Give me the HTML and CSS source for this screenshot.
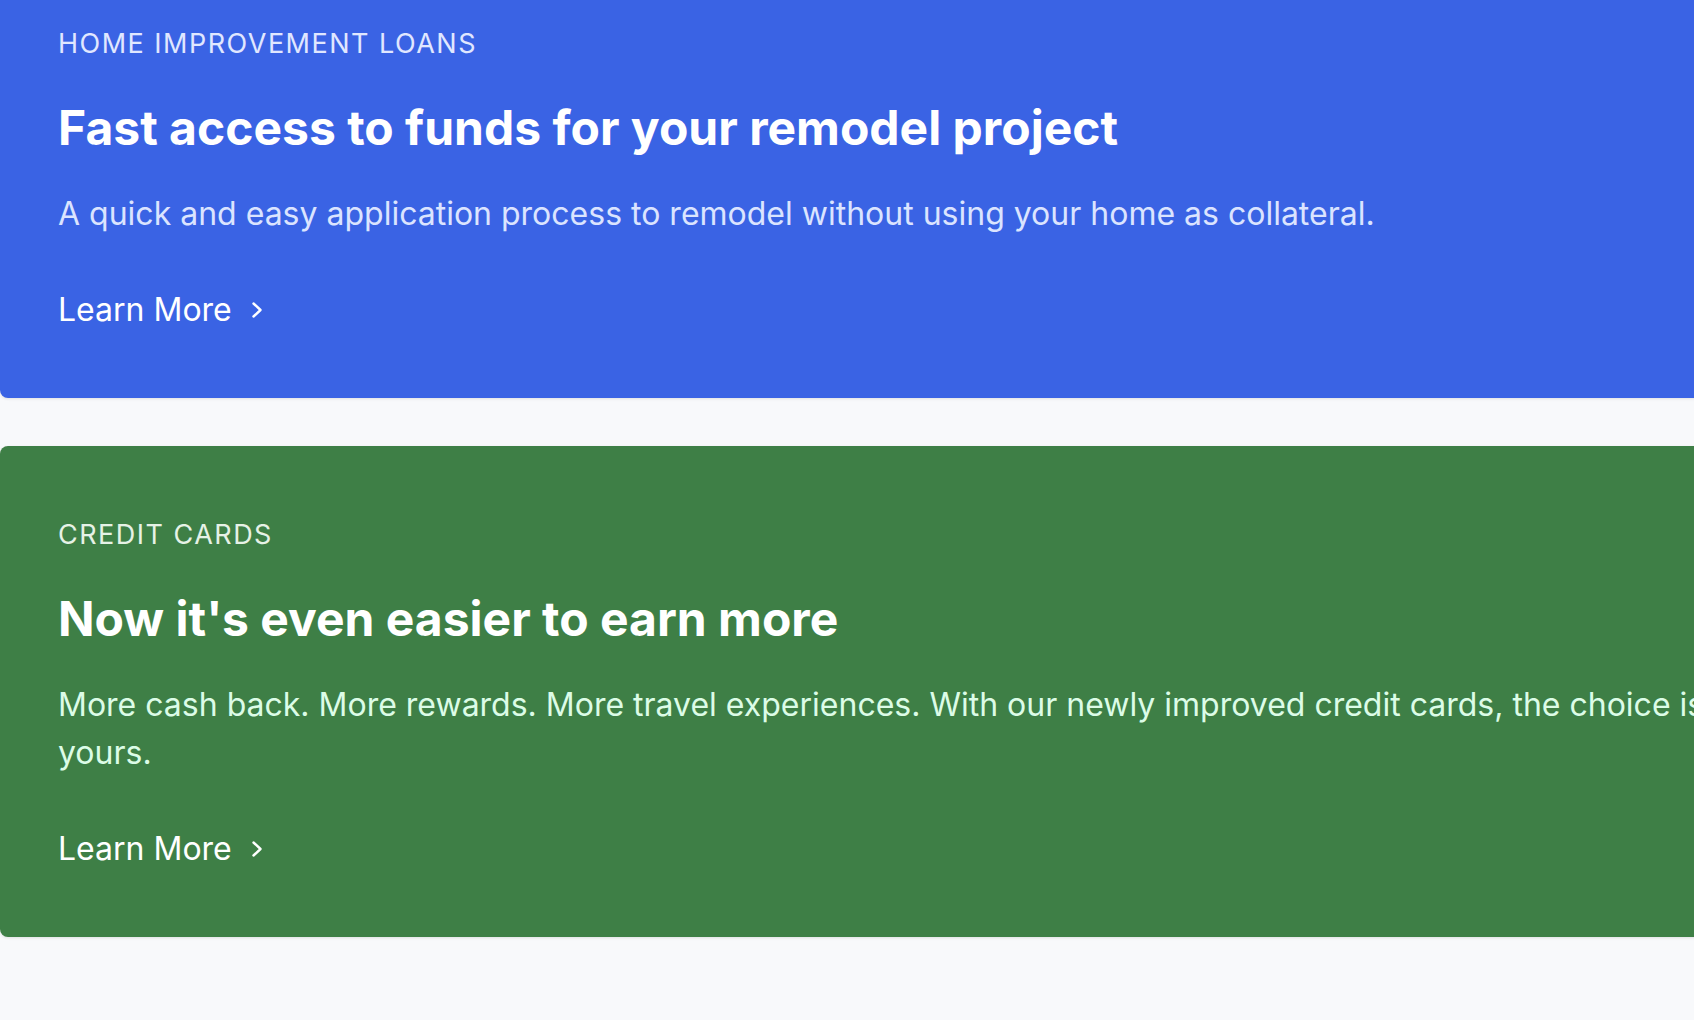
FILE: index.html
```html
<!DOCTYPE html>
<html lang="en">
<head>
<meta charset="utf-8">
<title>Offers</title>
<link rel="stylesheet" href="styles.css">
</head>
<body>
<main class="feed">
  <section class="card card--blue">
    <p class="label">HOME IMPROVEMENT LOANS</p>
    <h2 class="title">Fast access to funds for your remodel project</h2>
    <p class="desc">A quick and easy application process to remodel without using your home as collateral.</p>
    <a class="link" href="#">Learn More
      <svg class="chev" width="12" height="18" viewBox="0 0 12 18" aria-hidden="true"><polyline points="2.5,2.5 9.5,9 2.5,15.5" fill="none" stroke="currentColor" stroke-width="2.4" stroke-linecap="round" stroke-linejoin="round"/></svg>
    </a>
  </section>
  <section class="card card--green">
    <p class="label">CREDIT CARDS</p>
    <h2 class="title">Now it's even easier to earn more</h2>
    <p class="desc">More cash back. More rewards. More travel experiences. With our newly improved credit cards, the choice is yours.</p>
    <a class="link" href="#">Learn More
      <svg class="chev" width="12" height="18" viewBox="0 0 12 18" aria-hidden="true"><polyline points="2.5,2.5 9.5,9 2.5,15.5" fill="none" stroke="currentColor" stroke-width="2.4" stroke-linecap="round" stroke-linejoin="round"/></svg>
    </a>
  </section>
</main>
</body>
</html>
```
FILE: styles.css
```css
html, body {
  margin: 0;
  padding: 0;
  background: #f8f9fb;
  overflow: hidden;
  height: 100%;
}
body {
  font-family: Inter, "Noto Sans", "Liberation Sans", sans-serif;
  color: #ffffff;
}
.feed {
  display: flex;
  flex-direction: column;
  gap: 48px;
  margin-top: -45px;
}
.card {
  width: 1800px;
  box-sizing: border-box;
  padding: 71px 58px 68px 58px;
  border-radius: 8px;
  box-shadow: 0 1px 3px rgba(0, 0, 0, 0.1);
  display: flex;
  flex-direction: column;
  align-items: flex-start;
}
.card--blue {
  background: #3a63e4;
}
.card--green {
  background: #3e7f46;
}
.label {
  margin: 0;
  font-size: 27px;
  line-height: 36px;
  letter-spacing: 0.055em;
  font-weight: 400;
}
.card--blue .label { color: #e0e7ff; }
.card--green .label { color: #e6f2e6; }
.title {
  margin: 38px 0 0;
  font-size: 48px;
  line-height: 56px;
  font-weight: 700;
  color: #ffffff;
}
.desc {
  margin: 34px 0 0;
  font-size: 32px;
  line-height: 48px;
  font-weight: 400;
}
.card--blue .desc { color: #dbe4ff; }
.card--green .desc { color: #dcfce7; }
.link {
  margin-top: 52px;
  display: flex;
  align-items: center;
  gap: 19px;
  font-size: 32px;
  line-height: 40px;
  color: #ffffff;
  text-decoration: none;
}
.chev {
  display: block;
}
```
